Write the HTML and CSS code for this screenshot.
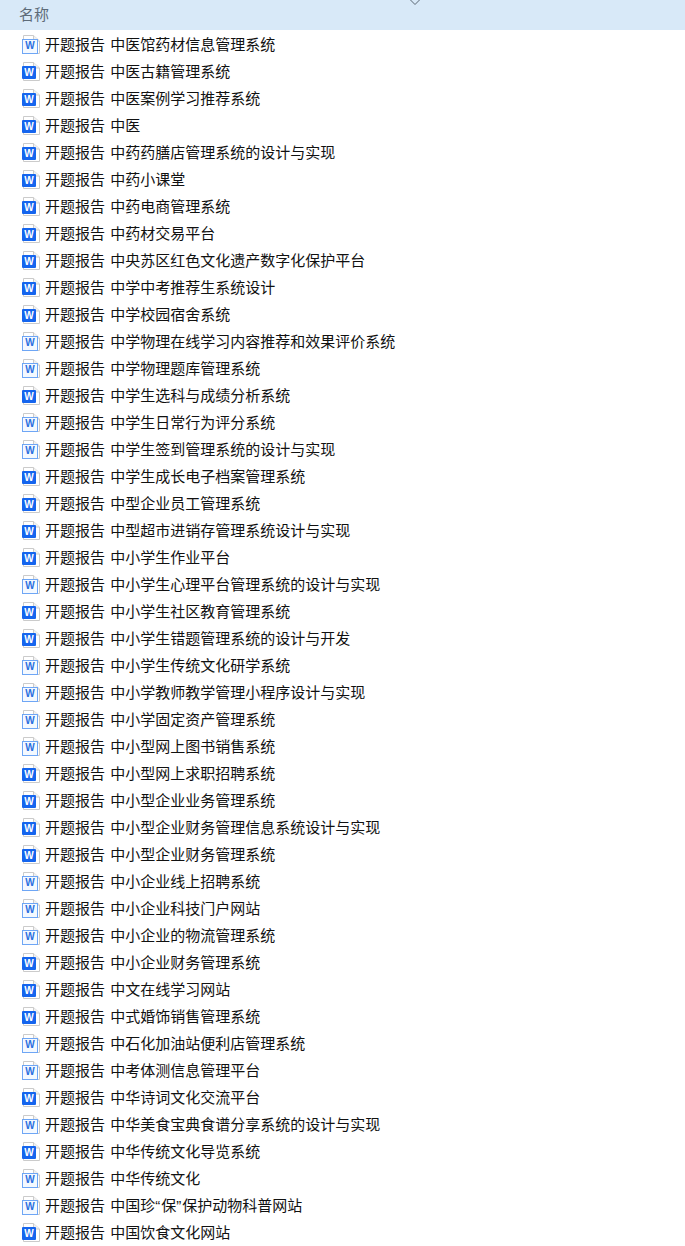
FILE: index.html
```html
<!DOCTYPE html>
<html lang="zh-CN">
<head>
<meta charset="utf-8">
<title>名称</title>
<link rel="stylesheet" href="styles.css">
</head>
<body>
<svg class="sprite" width="0" height="0" aria-hidden="true">
  <symbol id="sheet" viewBox="0 0 20 23">
    <path class="page" d="M3.5 2.5H13.5L19.5 8V20.5H3.5Z"/>
    <path class="fold" d="M13.5 2.5V8H19.5"/>
  </symbol>
</svg>
<header class="head">
  <span class="head-label">名称</span>
  <svg class="sort" width="10" height="5" viewBox="0 0 10 5"><path d="M.5 0 5 4.5 9.5 0"/></svg>
</header>
<ul class="list">
<li class="row"><span class="doc light"><svg class="doc-sheet"><use href="#sheet"/></svg></span><span>开题报告 中医馆药材信息管理系统</span></li>
<li class="row"><span class="doc dark"><svg class="doc-sheet"><use href="#sheet"/></svg></span><span>开题报告 中医古籍管理系统</span></li>
<li class="row"><span class="doc dark"><svg class="doc-sheet"><use href="#sheet"/></svg></span><span>开题报告 中医案例学习推荐系统</span></li>
<li class="row"><span class="doc dark"><svg class="doc-sheet"><use href="#sheet"/></svg></span><span>开题报告 中医</span></li>
<li class="row"><span class="doc dark"><svg class="doc-sheet"><use href="#sheet"/></svg></span><span>开题报告 中药药膳店管理系统的设计与实现</span></li>
<li class="row"><span class="doc dark"><svg class="doc-sheet"><use href="#sheet"/></svg></span><span>开题报告 中药小课堂</span></li>
<li class="row"><span class="doc dark"><svg class="doc-sheet"><use href="#sheet"/></svg></span><span>开题报告 中药电商管理系统</span></li>
<li class="row"><span class="doc dark"><svg class="doc-sheet"><use href="#sheet"/></svg></span><span>开题报告 中药材交易平台</span></li>
<li class="row"><span class="doc dark"><svg class="doc-sheet"><use href="#sheet"/></svg></span><span>开题报告 中央苏区红色文化遗产数字化保护平台</span></li>
<li class="row"><span class="doc dark"><svg class="doc-sheet"><use href="#sheet"/></svg></span><span>开题报告 中学中考推荐生系统设计</span></li>
<li class="row"><span class="doc dark"><svg class="doc-sheet"><use href="#sheet"/></svg></span><span>开题报告 中学校园宿舍系统</span></li>
<li class="row"><span class="doc light"><svg class="doc-sheet"><use href="#sheet"/></svg></span><span>开题报告 中学物理在线学习内容推荐和效果评价系统</span></li>
<li class="row"><span class="doc light"><svg class="doc-sheet"><use href="#sheet"/></svg></span><span>开题报告 中学物理题库管理系统</span></li>
<li class="row"><span class="doc dark"><svg class="doc-sheet"><use href="#sheet"/></svg></span><span>开题报告 中学生选科与成绩分析系统</span></li>
<li class="row"><span class="doc light"><svg class="doc-sheet"><use href="#sheet"/></svg></span><span>开题报告 中学生日常行为评分系统</span></li>
<li class="row"><span class="doc light"><svg class="doc-sheet"><use href="#sheet"/></svg></span><span>开题报告 中学生签到管理系统的设计与实现</span></li>
<li class="row"><span class="doc dark"><svg class="doc-sheet"><use href="#sheet"/></svg></span><span>开题报告 中学生成长电子档案管理系统</span></li>
<li class="row"><span class="doc dark"><svg class="doc-sheet"><use href="#sheet"/></svg></span><span>开题报告 中型企业员工管理系统</span></li>
<li class="row"><span class="doc dark"><svg class="doc-sheet"><use href="#sheet"/></svg></span><span>开题报告 中型超市进销存管理系统设计与实现</span></li>
<li class="row"><span class="doc dark"><svg class="doc-sheet"><use href="#sheet"/></svg></span><span>开题报告 中小学生作业平台</span></li>
<li class="row"><span class="doc light"><svg class="doc-sheet"><use href="#sheet"/></svg></span><span>开题报告 中小学生心理平台管理系统的设计与实现</span></li>
<li class="row"><span class="doc dark"><svg class="doc-sheet"><use href="#sheet"/></svg></span><span>开题报告 中小学生社区教育管理系统</span></li>
<li class="row"><span class="doc dark"><svg class="doc-sheet"><use href="#sheet"/></svg></span><span>开题报告 中小学生错题管理系统的设计与开发</span></li>
<li class="row"><span class="doc light"><svg class="doc-sheet"><use href="#sheet"/></svg></span><span>开题报告 中小学生传统文化研学系统</span></li>
<li class="row"><span class="doc light"><svg class="doc-sheet"><use href="#sheet"/></svg></span><span>开题报告 中小学教师教学管理小程序设计与实现</span></li>
<li class="row"><span class="doc light"><svg class="doc-sheet"><use href="#sheet"/></svg></span><span>开题报告 中小学固定资产管理系统</span></li>
<li class="row"><span class="doc light"><svg class="doc-sheet"><use href="#sheet"/></svg></span><span>开题报告 中小型网上图书销售系统</span></li>
<li class="row"><span class="doc dark"><svg class="doc-sheet"><use href="#sheet"/></svg></span><span>开题报告 中小型网上求职招聘系统</span></li>
<li class="row"><span class="doc dark"><svg class="doc-sheet"><use href="#sheet"/></svg></span><span>开题报告 中小型企业业务管理系统</span></li>
<li class="row"><span class="doc dark"><svg class="doc-sheet"><use href="#sheet"/></svg></span><span>开题报告 中小型企业财务管理信息系统设计与实现</span></li>
<li class="row"><span class="doc dark"><svg class="doc-sheet"><use href="#sheet"/></svg></span><span>开题报告 中小型企业财务管理系统</span></li>
<li class="row"><span class="doc light"><svg class="doc-sheet"><use href="#sheet"/></svg></span><span>开题报告 中小企业线上招聘系统</span></li>
<li class="row"><span class="doc light"><svg class="doc-sheet"><use href="#sheet"/></svg></span><span>开题报告 中小企业科技门户网站</span></li>
<li class="row"><span class="doc light"><svg class="doc-sheet"><use href="#sheet"/></svg></span><span>开题报告 中小企业的物流管理系统</span></li>
<li class="row"><span class="doc dark"><svg class="doc-sheet"><use href="#sheet"/></svg></span><span>开题报告 中小企业财务管理系统</span></li>
<li class="row"><span class="doc dark"><svg class="doc-sheet"><use href="#sheet"/></svg></span><span>开题报告 中文在线学习网站</span></li>
<li class="row"><span class="doc dark"><svg class="doc-sheet"><use href="#sheet"/></svg></span><span>开题报告 中式婚饰销售管理系统</span></li>
<li class="row"><span class="doc light"><svg class="doc-sheet"><use href="#sheet"/></svg></span><span>开题报告 中石化加油站便利店管理系统</span></li>
<li class="row"><span class="doc light"><svg class="doc-sheet"><use href="#sheet"/></svg></span><span>开题报告 中考体测信息管理平台</span></li>
<li class="row"><span class="doc dark"><svg class="doc-sheet"><use href="#sheet"/></svg></span><span>开题报告 中华诗词文化交流平台</span></li>
<li class="row"><span class="doc light"><svg class="doc-sheet"><use href="#sheet"/></svg></span><span>开题报告 中华美食宝典食谱分享系统的设计与实现</span></li>
<li class="row"><span class="doc dark"><svg class="doc-sheet"><use href="#sheet"/></svg></span><span>开题报告 中华传统文化导览系统</span></li>
<li class="row"><span class="doc light"><svg class="doc-sheet"><use href="#sheet"/></svg></span><span>开题报告 中华传统文化</span></li>
<li class="row"><span class="doc light"><svg class="doc-sheet"><use href="#sheet"/></svg></span><span>开题报告 中国珍<span class="quote">“</span>保<span class="quote">”</span>保护动物科普网站</span></li>
<li class="row"><span class="doc dark"><svg class="doc-sheet"><use href="#sheet"/></svg></span><span>开题报告 中国饮食文化网站</span></li>
</ul>
</body>
</html>
```
FILE: styles.css
```css
* { box-sizing: border-box; }
html, body { margin: 0; padding: 0; }
body {
  width: 685px;
  height: 1246px;
  overflow: hidden;
  background: #fff;
  color: #111;
  font: 15px/27px "Liberation Sans", "Noto Sans CJK SC", sans-serif;
  word-spacing: 1px;
}
.sprite { position: absolute; }
.head {
  position: relative;
  height: 30px;
  padding-left: 19px;
  background: #d8e9f8;
  line-height: 30px;
  color: #5d6b78;
}
.sort {
  position: absolute;
  left: 410px;
  top: 0;
}
.sort path { fill: none; stroke: #5a6672; stroke-width: 1; }
.list {
  list-style: none;
  margin: 0;
  padding: 1px 0 0 20px;
}
.row {
  display: flex;
  align-items: center;
  gap: 5px;
  height: 27px;
  white-space: nowrap;
}
.quote { letter-spacing: 1px; }
.doc {
  position: relative;
  display: block;
  flex: none;
  width: 20px;
  height: 23px;
}
.doc-sheet { display: block; width: 20px; height: 23px; }
.page { fill: #fff; stroke: #cbcbcb; stroke-width: 1; }
.fold { fill: #f1f1f1; stroke: #cbcbcb; stroke-width: 1; }
.doc::after {
  content: "W";
  position: absolute;
  left: 2px;
  top: 6px;
  width: 14px;
  height: 13px;
  font: bold 10px/13px "Liberation Sans", sans-serif;
  text-align: center;
}
.light::after {
  background: #f4f9ff;
  border: 1px solid #6ea6f5;
  line-height: 11px;
  color: #2a6fe0;
}
.dark::after {
  background: #1565ee;
  border-radius: 1px;
  color: #fff;
}
```
